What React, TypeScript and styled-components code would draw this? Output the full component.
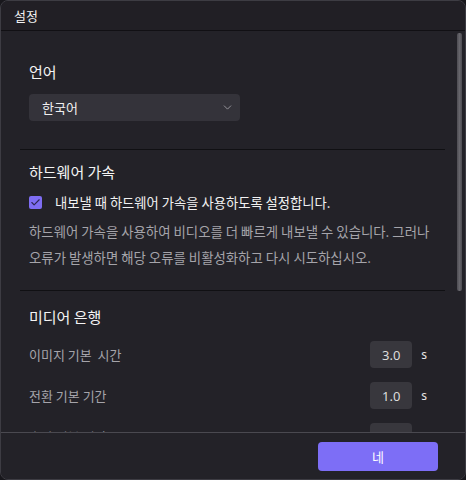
import styled, { createGlobalStyle } from 'styled-components'
import { ChevronDown, Check } from 'lucide-react'

const Global = createGlobalStyle`
  html, body {
    margin: 0;
    padding: 0;
    background: #18171c;
  }
  body {
    font-family: "Noto Sans CJK KR", "Noto Sans", sans-serif;
    color: #ffffff;
  }
`

const Window = styled.div`
  width: 466px;
  height: 480px;
  box-sizing: border-box;
  border: 1px solid #3d3c43;
  border-radius: 8px;
  background: #232228;
  display: flex;
  flex-direction: column;
  overflow: hidden;
`

const TitleBar = styled.div`
  height: 29px;
  flex: none;
  display: flex;
  align-items: center;
  padding-left: 13px;
  background: #211f25;
  border-bottom: 1px solid #111014;
  font-size: 13px;
  color: #f2f2f2;
`

const Viewport = styled.div`
  position: relative;
  flex: 1;
  min-height: 0;
`

const Body = styled.div`
  height: 100%;
  overflow: hidden;
  padding: 0 20px 0 19px;
`

const ScrollThumb = styled.div`
  position: absolute;
  top: 2px;
  right: 3px;
  width: 5px;
  height: 258px;
  border-radius: 2px;
  background: linear-gradient(90deg, #4d4c52, #67666c 50%, #4d4c52);
`

const Section = styled.section<{ $top: number; $bottom: number; $last?: boolean }>`
  padding: ${(p) => p.$top}px 0 ${(p) => p.$bottom}px 9px;
  border-bottom: ${(p) => (p.$last ? 'none' : '1px solid #101013')};
`

const SectionTitle = styled.div`
  font-size: 15px;
  line-height: 22px;
  color: #f4f4f4;
`

const Select = styled.div`
  margin-top: 11px;
  width: 211px;
  height: 27px;
  box-sizing: border-box;
  display: flex;
  align-items: center;
  justify-content: space-between;
  padding: 0 6px 0 13px;
  background: #34333a;
  border-radius: 4px;
  font-size: 13px;
  color: #f0f0f0;

  svg {
    color: #a9a8ae;
  }
`

const CheckRow = styled.label`
  margin-top: 9px;
  display: flex;
  align-items: center;
  gap: 13px;
  height: 20px;
  font-size: 13.3px;
  color: #f2f2f2;
`

const Box = styled.span`
  width: 13px;
  height: 13px;
  border-radius: 2px;
  background: #7e6df3;
  display: flex;
  align-items: center;
  justify-content: center;
  color: #2c2654;
`

const Desc = styled.p`
  margin: 6px 0 0;
  font-size: 13.4px;
  line-height: 26px;
  color: #a5a4aa;
  white-space: nowrap;
`

const Rows = styled.div`
  margin-top: 13px;
  display: grid;
  gap: 14px;
  padding-right: 18px;
`

const Row = styled.div`
  display: flex;
  align-items: center;
  justify-content: space-between;
  font-size: 13px;
  color: #a5a4aa;
`

const Label = styled.span`
  white-space: pre;
`

const Field = styled.div`
  display: flex;
  align-items: center;
  gap: 9px;
  color: #e8e8e8;
  font-family: "Noto Sans", sans-serif;
  font-size: 12px;
`

const NumBox = styled.div`
  width: 42px;
  height: 27px;
  border-radius: 4px;
  background: #38373d;
  display: flex;
  align-items: center;
  justify-content: center;
  font-size: 13px;
  color: #dcdcdc;
`

const Footer = styled.div`
  flex: none;
  height: 46px;
  border-top: 1px solid #4a4950;
  display: flex;
  align-items: center;
  justify-content: flex-end;
  padding-right: 27px;
  background: #232228;
`

const Button = styled.button`
  width: 120px;
  height: 29px;
  border: none;
  border-radius: 4px;
  background: #7d6ef6;
  color: #ffffff;
  font-family: inherit;
  font-size: 13px;
`

const mediaRows = [
  { label: '이미지 기본  시간', value: '3.0' },
  { label: '전환 기본 기간', value: '1.0' },
  { label: '효과 기본 기간', value: '2.0' },
]

export default function App() {
  return (
    <>
      <Global />
      <Window>
        <TitleBar>설정</TitleBar>
        <Viewport>
          <Body>
            <Section $top={30} $bottom={28}>
              <SectionTitle>언어</SectionTitle>
              <Select>
                <span>한국어</span>
                <ChevronDown size={13} strokeWidth={1.5} />
              </Select>
            </Section>
            <Section $top={11} $bottom={20}>
              <SectionTitle>하드웨어 가속</SectionTitle>
              <CheckRow>
                <Box>
                  <Check size={11} strokeWidth={2.5} />
                </Box>
                내보낼 때 하드웨어 가속을 사용하도록 설정합니다.
              </CheckRow>
              <Desc>
                하드웨어 가속을 사용하여 비디오를 더 빠르게 내보낼 수 있습니다. 그러나
                <br />
                오류가 발생하면 해당 오류를 비활성화하고 다시 시도하십시오.
              </Desc>
            </Section>
            <Section $top={15} $bottom={30} $last>
              <SectionTitle>미디어 은행</SectionTitle>
              <Rows>
                {mediaRows.map((r) => (
                  <Row key={r.label}>
                    <Label>{r.label}</Label>
                    <Field>
                      <NumBox>{r.value}</NumBox>s
                    </Field>
                  </Row>
                ))}
              </Rows>
            </Section>
          </Body>
          <ScrollThumb />
        </Viewport>
        <Footer>
          <Button>네</Button>
        </Footer>
      </Window>
    </>
  )
}
